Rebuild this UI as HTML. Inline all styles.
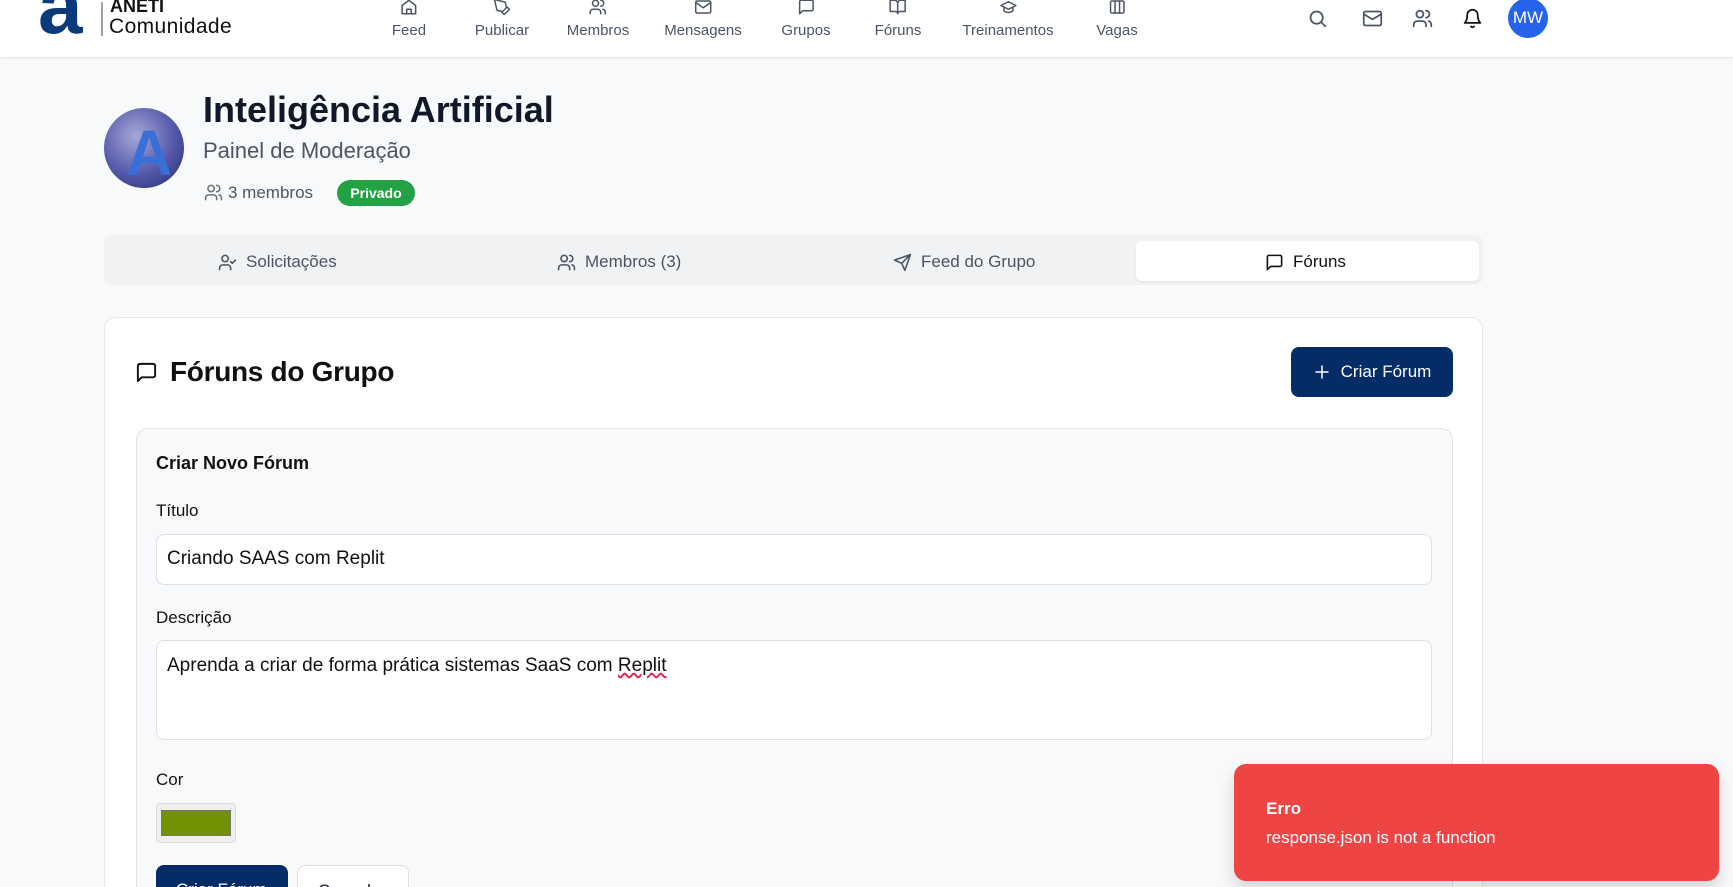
<!DOCTYPE html>
<html style="width:1733px;height:887px;overflow:hidden"><head><meta charset="utf-8"><style>
*{box-sizing:border-box;margin:0;padding:0}
body{width:1733px;height:887px;overflow:hidden;background:#f8f9fb;font-family:"Liberation Sans",Arial,sans-serif;color:#111827;position:relative}
.hdr{position:absolute;left:0;top:0;width:1733px;height:58px;background:#fff;border-bottom:1px solid #e5e7eb;box-shadow:0 1px 2px rgba(0,0,0,.04);overflow:hidden}
.nav{position:absolute;top:0;text-align:center;font-size:15px;color:#4b5563;transform:translateX(-50%)}
.nav svg{display:block;margin:-2px auto 0}
.nav span{display:block;margin-top:6px}
.ri{position:absolute;top:8px}
svg{fill:none;stroke:currentColor;stroke-width:2;stroke-linecap:round;stroke-linejoin:round}
.abs{position:absolute}
</style></head><body>
<div class="hdr">
 <div class="abs" style="left:38px;top:-34px;font:bold 80px 'Liberation Sans',sans-serif;color:#0b3a7a;line-height:80px;letter-spacing:-2px">a</div>
 <div class="abs" style="left:101px;top:2px;width:2px;height:34px;background:#9ca3af"></div>
 <div class="abs" style="left:110px;top:-4px;font-weight:bold;font-size:18px;color:#111">ANETI</div>
 <div class="abs" style="left:109px;top:15px;font-size:21px;color:#111;letter-spacing:.4px">Comunidade</div>
 <div class="nav" style="left:409px"><svg width="18" height="18" viewBox="0 0 24 24"><path d="M3 10l9-7 9 7v11H3z"/><path d="M9 21v-6h6v6"/></svg><span>Feed</span></div>
 <div class="nav" style="left:502px"><svg width="18" height="18" viewBox="0 0 24 24"><path d="M12 19l7-7 3 3-7 7zM18 13l-1.5-7.5L2 2l3.5 14.5L13 18z"/></svg><span>Publicar</span></div>
 <div class="nav" style="left:598px"><svg width="18" height="18" viewBox="0 0 24 24"><circle cx="9" cy="7" r="4"/><path d="M2 21v-2a4 4 0 014-4h6a4 4 0 014 4v2M16 3a4 4 0 010 8M22 21v-2a4 4 0 00-3-4"/></svg><span>Membros</span></div>
 <div class="nav" style="left:703px"><svg width="18" height="18" viewBox="0 0 24 24"><rect x="2" y="4" width="20" height="16" rx="2"/><path d="M22 6l-10 7L2 6"/></svg><span>Mensagens</span></div>
 <div class="nav" style="left:806px"><svg width="18" height="18" viewBox="0 0 24 24"><path d="M21 15a2 2 0 01-2 2H7l-4 4V5a2 2 0 012-2h14a2 2 0 012 2z"/></svg><span>Grupos</span></div>
 <div class="nav" style="left:898px"><svg width="18" height="18" viewBox="0 0 24 24"><path d="M2 3h6a4 4 0 014 4v14a3 3 0 00-3-3H2zM22 3h-6a4 4 0 00-4 4v14a3 3 0 013-3h7z"/></svg><span>Fóruns</span></div>
 <div class="nav" style="left:1008px"><svg width="18" height="18" viewBox="0 0 24 24"><path d="M22 10L12 5 2 10l10 5 10-5zM6 12v5c3 3 9 3 12 0v-5"/></svg><span>Treinamentos</span></div>
 <div class="nav" style="left:1117px"><svg width="18" height="18" viewBox="0 0 24 24"><rect x="3" y="4" width="18" height="16" rx="2"/><path d="M9 4v16M15 4v16"/></svg><span>Vagas</span></div>
 <svg class="ri" style="left:1307px;color:#4b5563" width="21" height="21" viewBox="0 0 24 24"><circle cx="11" cy="11" r="7"/><path d="M21 21l-4.3-4.3"/></svg>
 <svg class="ri" style="left:1362px;color:#4b5563" width="21" height="21" viewBox="0 0 24 24"><rect x="2" y="4" width="20" height="16" rx="2"/><path d="M22 7l-10 6L2 7"/></svg>
 <svg class="ri" style="left:1412px;color:#4b5563" width="21" height="21" viewBox="0 0 24 24"><circle cx="9" cy="7" r="4"/><path d="M2 21v-2a4 4 0 014-4h6a4 4 0 014 4v2M16 3a4 4 0 010 8M22 21v-2a4 4 0 00-3-4"/></svg>
 <svg class="ri" style="left:1462px;color:#111" width="21" height="21" viewBox="0 0 24 24"><path d="M6 8a6 6 0 0112 0c0 7 3 9 3 9H3s3-2 3-9M10.3 21a1.9 1.9 0 003.4 0"/></svg>
 <div class="abs" style="left:1508px;top:-2px;width:40px;height:40px;border-radius:50%;background:#2563eb;color:#fff;font-size:17px;text-align:center;line-height:40px">MW</div>
</div>

<div class="abs" style="left:104px;top:108px;width:80px;height:80px;border-radius:50%;background:radial-gradient(circle at 40% 35%,#a5a8d8,#5358a8 55%,#1e2a6e);overflow:hidden"><div style="position:absolute;left:22px;top:8px;font:bold 64px 'Liberation Sans',sans-serif;color:#3a6fd8">A</div></div>
<div class="abs" style="left:203px;top:89px;font-size:36px;font-weight:bold;color:#111827">Inteligência Artificial</div>
<div class="abs" style="left:203px;top:138px;font-size:22px;color:#4b5563">Painel de Moderação</div>
<svg class="abs" style="left:204px;top:183px;color:#6b7280" width="19" height="19" viewBox="0 0 24 24"><circle cx="9" cy="7" r="4"/><path d="M2 21v-2a4 4 0 014-4h6a4 4 0 014 4v2M16 3a4 4 0 010 8M22 21v-2a4 4 0 00-3-4"/></svg>
<div class="abs" style="left:228px;top:183px;font-size:17px;color:#4b5563">3 membros</div>
<div class="abs" style="left:337px;top:180px;width:78px;height:26px;border-radius:13px;background:#22a244;color:#fff;font-size:14px;font-weight:bold;text-align:center;line-height:26px">Privado</div>

<div class="abs" style="left:104px;top:235px;width:1379px;height:50px;border-radius:8px;background:#f1f2f4"></div>
<div class="abs" style="left:1136px;top:241px;width:343px;height:40px;border-radius:6px;background:#fff;box-shadow:0 1px 2px rgba(0,0,0,.08)"></div>
<div class="abs" style="left:218px;top:252px;font-size:17px;color:#4b5563;display:flex;gap:9px;align-items:center"><svg width="19" height="19" viewBox="0 0 24 24"><circle cx="9" cy="7" r="4"/><path d="M2 21v-2a4 4 0 014-4h6a4 4 0 014 4v2M16 11l2 2 4-4"/></svg>Solicitações</div>
<div class="abs" style="left:557px;top:252px;font-size:17px;color:#4b5563;display:flex;gap:9px;align-items:center"><svg width="19" height="19" viewBox="0 0 24 24"><circle cx="9" cy="7" r="4"/><path d="M2 21v-2a4 4 0 014-4h6a4 4 0 014 4v2M16 3a4 4 0 010 8M22 21v-2a4 4 0 00-3-4"/></svg>Membros (3)</div>
<div class="abs" style="left:893px;top:252px;font-size:17px;color:#4b5563;display:flex;gap:9px;align-items:center"><svg width="19" height="19" viewBox="0 0 24 24"><path d="M22 2L11 13M22 2l-7 20-4-9-9-4z"/></svg>Feed do Grupo</div>
<div class="abs" style="left:1265px;top:252px;font-size:17px;color:#111;display:flex;gap:9px;align-items:center"><svg width="19" height="19" viewBox="0 0 24 24"><path d="M21 15a2 2 0 01-2 2H7l-4 4V5a2 2 0 012-2h14a2 2 0 012 2z"/></svg>Fóruns</div>

<div class="abs" style="left:104px;top:317px;width:1379px;height:700px;border-radius:12px;background:#fff;border:1px solid #e5e7eb"></div>
<svg class="abs" style="left:135px;top:361px;color:#111" width="23" height="23" viewBox="0 0 24 24"><path d="M21 15a2 2 0 01-2 2H7l-4 4V5a2 2 0 012-2h14a2 2 0 012 2z"/></svg>
<div class="abs" style="left:170px;top:356px;font-size:28px;font-weight:bold;color:#111;letter-spacing:-.3px">Fóruns do Grupo</div>
<div class="abs" style="left:1291px;top:347px;width:162px;height:50px;border-radius:8px;background:#042c67;color:#fff;font-size:17px;display:flex;align-items:center;justify-content:center;gap:10px"><svg width="18" height="18" viewBox="0 0 24 24"><path d="M12 4v16M4 12h16"/></svg>Criar Fórum</div>

<div class="abs" style="left:136px;top:428px;width:1317px;height:600px;border-radius:12px;background:#f8f9fb;border:1px solid #e2e4e8"></div>
<div class="abs" style="left:156px;top:453px;font-size:18px;font-weight:bold;color:#111">Criar Novo Fórum</div>
<div class="abs" style="left:156px;top:501px;font-size:17px;color:#111">Título</div>
<div class="abs" style="left:156px;top:534px;width:1276px;height:51px;border-radius:8px;background:#fff;border:1px solid #dcdfe4;font-size:19px;padding:13px 10px;color:#111">Criando SAAS com Replit</div>
<div class="abs" style="left:156px;top:608px;font-size:17px;color:#111">Descrição</div>
<div class="abs" style="left:156px;top:640px;width:1276px;height:100px;border-radius:8px;background:#fff;border:1px solid #dcdfe4;font-size:19px;padding:14px 10px;color:#111">Aprenda a criar de forma prática sistemas SaaS com <span style="text-decoration:underline wavy #e11d48">Replit</span></div>
<div class="abs" style="left:156px;top:770px;font-size:17px;color:#111">Cor</div>
<div class="abs" style="left:156px;top:803px;width:80px;height:40px;border-radius:4px;background:#efefef;border:1px solid #ddd;padding:6px 4px"><div style="width:100%;height:100%;background:#739104;border:1px solid #777"></div></div>
<div class="abs" style="left:156px;top:865px;width:132px;height:50px;border-radius:8px;background:#042c67;color:#fff;font-size:17px;padding:15px 20px">Criar Fórum</div>
<div class="abs" style="left:297px;top:865px;width:112px;height:50px;border-radius:8px;background:#fff;border:1px solid #dcdfe4;font-size:17px;padding:15px 20px">Cancelar</div>

<div class="abs" style="left:1234px;top:764px;width:485px;height:117px;border-radius:12px;background:#ef4444;color:#fff;box-shadow:0 8px 16px rgba(0,0,0,.15)">
 <div style="position:absolute;left:32px;top:35px;font-size:17px;font-weight:bold">Erro</div>
 <div style="position:absolute;left:32px;top:64px;font-size:17px">response.json is not a function</div>
</div>
</body></html>
